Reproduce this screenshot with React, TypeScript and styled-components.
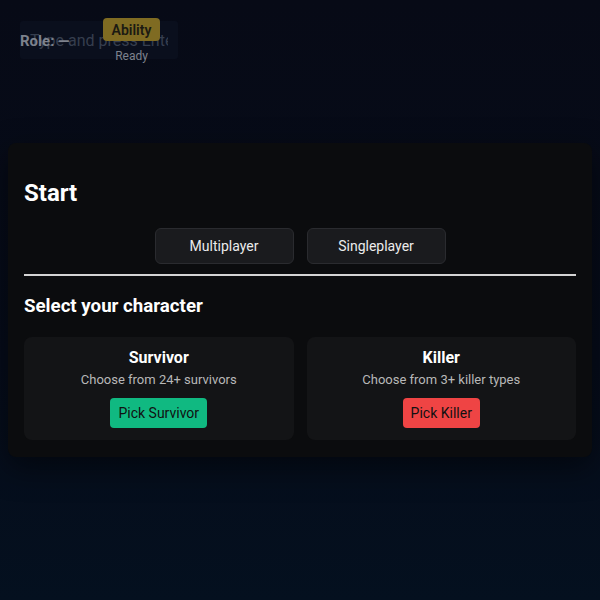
import React from "react";
import styled, { createGlobalStyle } from "styled-components";

const Global = createGlobalStyle`
  html, body { margin: 0; padding: 0; }
  body {
    font-family: Roboto, "Liberation Sans", sans-serif;
    background: #060a16;
    color: #fff;
  }
  * { box-sizing: border-box; }
`;

const Stage = styled.div`
  position: relative;
  height: 600px;
  background: linear-gradient(180deg, #070a16 0%, #060c1a 60%, #04101f 100%);
  display: flex;
  align-items: center;
  justify-content: center;
`;

const Hud = styled.div`
  position: absolute;
  top: 18px;
  left: 20px;
  width: 158px;
  height: 48px;
`;

const ChatInput = styled.input`
  display: block;
  margin-top: 3px;
  width: 158px;
  height: 38px;
  padding: 0 10px;
  border: none;
  outline: none;
  border-radius: 3px;
  background: #0a0f1d;
  font-family: Roboto, "Liberation Sans", sans-serif;
  font-size: 16px;
  color: #3a4252;
  &::placeholder { color: #363e4e; }
`;

const RoleTag = styled.div`
  position: absolute;
  left: 0;
  top: 14px;
  font-size: 15px;
  font-weight: 700;
  color: #7d828d;
`;

const AbilityBox = styled.div`
  position: absolute;
  left: 83px;
  top: 0;
  width: 57px;
  display: flex;
  flex-direction: column;
  align-items: center;
  gap: 8px;
`;

const AbilityButton = styled.button`
  width: 57px;
  height: 23px;
  border: none;
  border-radius: 4px;
  background: #7f6b22;
  color: #1b1a12;
  font-family: Roboto, "Liberation Sans", sans-serif;
  font-size: 14px;
  font-weight: 600;
  padding: 0;
`;

const ReadyText = styled.div`
  font-size: 12px;
  line-height: 14px;
  color: #7d828d;
`;

const Modal = styled.div`
  width: 584px;
  background: #0b0c0e;
  border-radius: 8px;
  padding: 16px 16px 17px;
  box-shadow: 0 10px 30px rgba(0, 0, 0, 0.5);
`;

const Title = styled.h2`
  margin: 20px 0 21px;
  font-size: 24px;
  line-height: 28px;
  font-weight: 700;
  color: #fff;
`;

const ModeRow = styled.div`
  display: flex;
  justify-content: center;
  gap: 13px;
`;

const ModeButton = styled.button`
  width: 139px;
  height: 36px;
  background: #1a1b1e;
  border: 1px solid #2a2b2f;
  border-radius: 6px;
  color: #ececec;
  font-family: Roboto, "Liberation Sans", sans-serif;
  font-size: 14px;
`;

const Divider = styled.hr`
  margin: 10px 0 0;
  border: none;
  height: 2px;
  background: #d4d4d4;
`;

const Subtitle = styled.h3`
  margin: 19px 0 20px;
  font-size: 18.7px;
  line-height: 22px;
  font-weight: 700;
  color: #fff;
`;

const CardGrid = styled.div`
  display: grid;
  grid-template-columns: 1fr 1fr;
  gap: 13px;
`;

const Card = styled.div`
  background: #131416;
  border-radius: 8px;
  padding: 11px 12px 12px;
  display: flex;
  flex-direction: column;
  align-items: center;
`;

const CardTitle = styled.div`
  font-size: 16px;
  line-height: 20px;
  font-weight: 700;
  color: #fff;
`;

const CardDesc = styled.div`
  margin-top: 4px;
  font-size: 13px;
  line-height: 16px;
  color: #b8b8b8;
`;

const PickButton = styled.button<{ $tone: "green" | "red" }>`
  margin-top: 10px;
  height: 30px;
  padding: 0 8px;
  border: none;
  border-radius: 4px;
  background: ${(p) => (p.$tone === "green" ? "#10b981" : "#ef4444")};
  color: #111;
  font-family: Roboto, "Liberation Sans", sans-serif;
  font-size: 14px;
`;

export default function App() {
  return (
    <>
      <Global />
      <Stage>
        <Hud>
          <ChatInput placeholder="Type and press Enter" readOnly />
          <RoleTag>Role: —</RoleTag>
          <AbilityBox>
            <AbilityButton>Ability</AbilityButton>
            <ReadyText>Ready</ReadyText>
          </AbilityBox>
        </Hud>
        <Modal>
          <Title>Start</Title>
          <ModeRow>
            <ModeButton>Multiplayer</ModeButton>
            <ModeButton>Singleplayer</ModeButton>
          </ModeRow>
          <Divider />
          <Subtitle>Select your character</Subtitle>
          <CardGrid>
            <Card>
              <CardTitle>Survivor</CardTitle>
              <CardDesc>Choose from 24+ survivors</CardDesc>
              <PickButton $tone="green">Pick Survivor</PickButton>
            </Card>
            <Card>
              <CardTitle>Killer</CardTitle>
              <CardDesc>Choose from 3+ killer types</CardDesc>
              <PickButton $tone="red">Pick Killer</PickButton>
            </Card>
          </CardGrid>
        </Modal>
      </Stage>
    </>
  );
}
